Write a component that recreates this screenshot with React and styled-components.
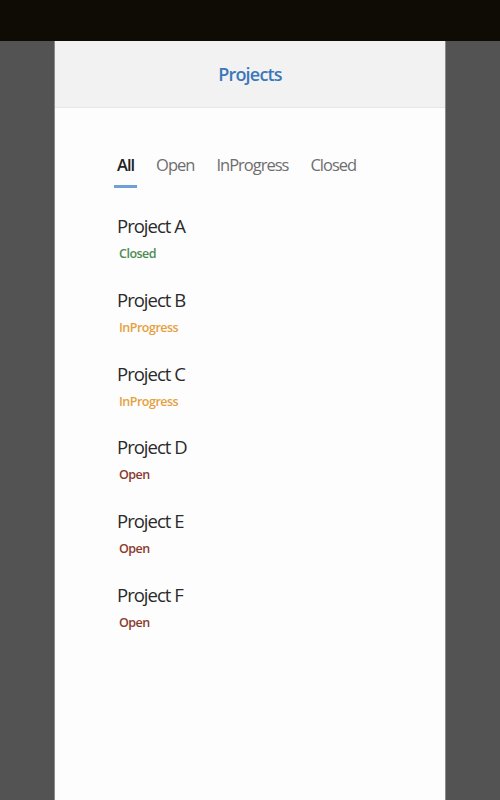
import * as React from 'react';
import styled, { createGlobalStyle } from 'styled-components';

const GlobalStyle = createGlobalStyle`
  html, body {
    margin: 0;
    padding: 0;
    height: 100%;
    background: #535353;
  }
  #root {
    height: 100%;
  }
`;

const Screen = styled.div`
  display: flex;
  flex-direction: column;
  height: 800px;
  font-family: "Open Sans", "Noto Sans", sans-serif;
`;

const TopBar = styled.div`
  height: 41px;
  flex-shrink: 0;
  background: #0e0c05;
`;

const Stage = styled.div`
  flex: 1;
  display: flex;
  background: #535353;
  padding-left: 54px;
`;

const Phone = styled.div`
  width: 390px;
  display: flex;
  flex-direction: column;
  background: #fdfdfd;
  border-left: 1px solid #8a8a8a;
  border-right: 1px solid #8a8a8a;
`;

const Header = styled.header`
  height: 66px;
  display: flex;
  align-items: center;
  justify-content: center;
  background: #f2f2f2;
  border-bottom: 1px solid #e6e6e6;
`;

const Title = styled.h1`
  margin: 0;
  font-size: 18px;
  font-weight: 600;
  color: #3b78b9;
  letter-spacing: -0.8px;
`;

const Content = styled.div`
  padding: 45px 0 0 62px;
`;

const Tabs = styled.nav`
  display: flex;
  gap: 22px;
  margin-bottom: 23px;
`;

const Tab = styled.div`
  position: relative;
  padding-bottom: 12px;
  font-size: 16.5px;
  letter-spacing: -1px;
  color: ${(p) => (p.$active ? '#222' : '#6e6e6e')};
  font-weight: ${(p) => (p.$active ? 600 : 400)};
  cursor: pointer;

  &::after {
    content: '';
    display: ${(p) => (p.$active ? 'block' : 'none')};
    position: absolute;
    left: -3px;
    right: -3px;
    bottom: 0;
    height: 3px;
    background: #6fa1d8;
  }
`;

const List = styled.ul`
  list-style: none;
  margin: 0;
  padding: 0;
  display: flex;
  flex-direction: column;
  gap: 18.8px;
`;

const Item = styled.li`
  display: flex;
  flex-direction: column;
  gap: 1px;
`;

const Name = styled.div`
  font-size: 18.5px;
  line-height: 30px;
  letter-spacing: -1px;
  color: #2a2a2a;
`;

const Status = styled.div`
  font-size: 12.5px;
  line-height: 24px;
  font-weight: 600;
  letter-spacing: -0.5px;
  padding-left: 2px;
  color: ${(p) => p.$color};
`;

const statusColors = {
  Closed: '#4e8b52',
  InProgress: '#e5a13d',
  Open: '#8a3a2c',
};

const tabs = ['All', 'Open', 'InProgress', 'Closed'];

const projects = [
  { name: 'Project A', status: 'Closed' },
  { name: 'Project B', status: 'InProgress' },
  { name: 'Project C', status: 'InProgress' },
  { name: 'Project D', status: 'Open' },
  { name: 'Project E', status: 'Open' },
  { name: 'Project F', status: 'Open' },
];

export default function App() {
  const [active, setActive] = React.useState('All');

  return (
    <Screen>
      <GlobalStyle />
      <TopBar />
      <Stage>
        <Phone>
          <Header>
            <Title>Projects</Title>
          </Header>
          <Content>
            <Tabs>
              {tabs.map((t) => (
                <Tab key={t} $active={t === active} onClick={() => setActive(t)}>
                  {t}
                </Tab>
              ))}
            </Tabs>
            <List>
              {projects
                .filter((p) => active === 'All' || p.status === active)
                .map((p) => (
                  <Item key={p.name}>
                    <Name>{p.name}</Name>
                    <Status $color={statusColors[p.status]}>{p.status}</Status>
                  </Item>
                ))}
            </List>
          </Content>
        </Phone>
      </Stage>
    </Screen>
  );
}
